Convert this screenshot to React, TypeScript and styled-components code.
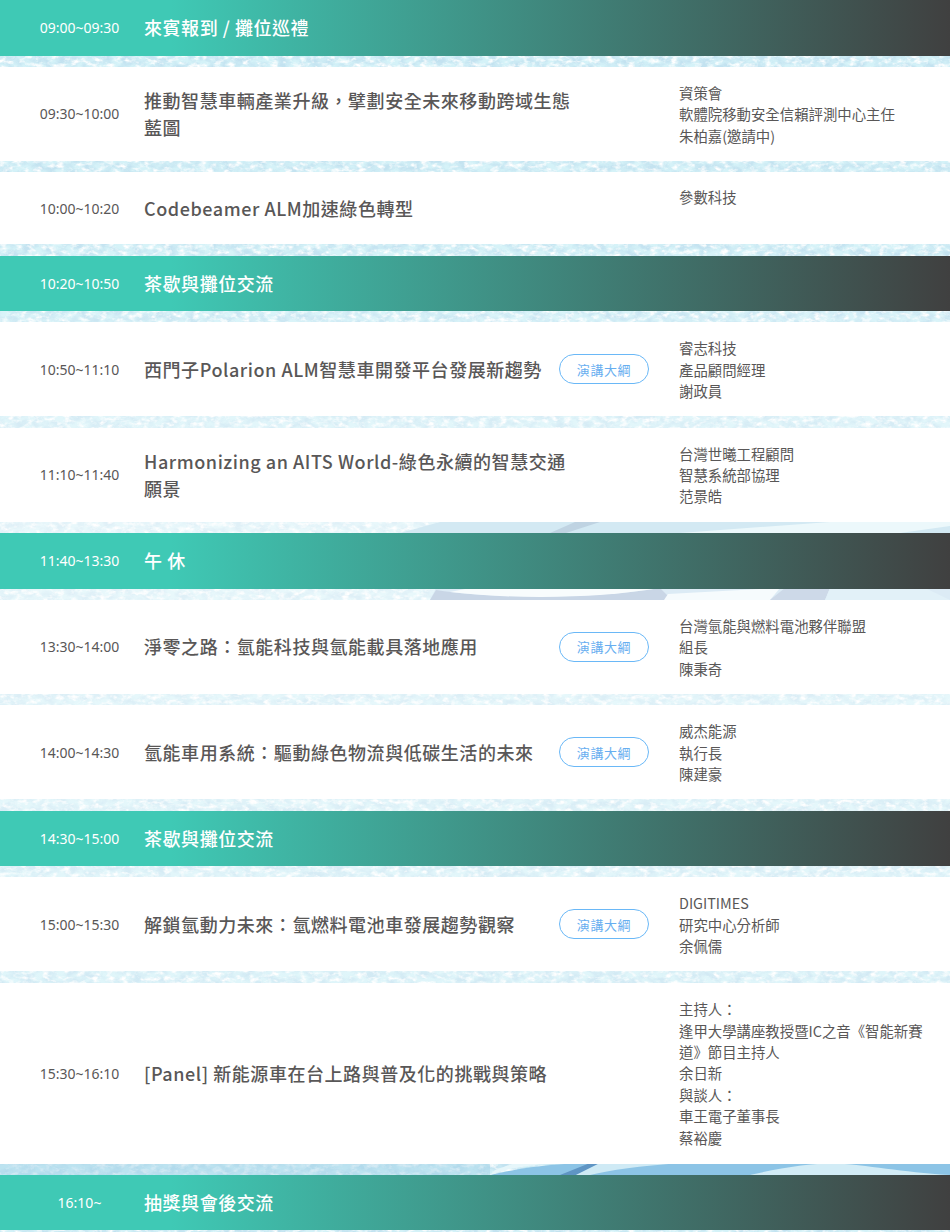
import React from 'react';
import styled, { createGlobalStyle } from 'styled-components';

const GlobalStyle = createGlobalStyle`
  html, body {
    margin: 0;
    padding: 0;
    background: #fff;
  }
  body {
    font-family: 'Noto Sans CJK TC', 'Noto Sans', sans-serif;
  }
`;

const Page = styled.div`
  position: relative;
  width: 950px;
  height: 1232px;
  overflow: hidden;
  background: #d4f2f8;
`;

const Backdrop = styled.svg`
  position: absolute;
  inset: 0;
  width: 950px;
  height: 1232px;
`;

const Agenda = styled.div`
  position: relative;
  display: flex;
  flex-direction: column;
  gap: 11.35px;
`;

const Row = styled.div<{ $break?: boolean; $h: number }>`
  display: grid;
  grid-template-columns: 144px 535px 1fr;
  align-items: center;
  height: ${({ $h }) => $h}px;
  background: ${({ $break }) =>
    $break ? 'linear-gradient(90deg, #3fc9b5 0%, #3fc9b5 18%, #404040 100%)' : '#fff'};
`;

const Time = styled.div<{ $break?: boolean }>`
  text-align: center;
  padding-left: 15px;
  font-family: 'Noto Sans', 'Noto Sans CJK TC', sans-serif;
  font-size: 14px;
  color: ${({ $break }) => ($break ? '#fff' : '#595757')};
`;

const Title = styled.div<{ $break?: boolean }>`
  display: flex;
  align-items: center;
  justify-content: space-between;
  padding-right: 30px;
  font-size: 18px;
  font-weight: 500;
  line-height: 27px;
  letter-spacing: 0.55px;
  color: ${({ $break }) => ($break ? '#fff' : '#595757')};
`;

const TitleText = styled.span`
  max-width: 430px;
`;

const OutlineButton = styled.span`
  flex: none;
  display: flex;
  align-items: center;
  justify-content: center;
  box-sizing: border-box;
  width: 90px;
  height: 30px;
  border: 1.5px solid #6ab8f7;
  border-radius: 15px;
  font-size: 13px;
  font-weight: 400;
  letter-spacing: 0.6px;
  color: #67aef0;
`;

const Speaker = styled.div<{ $top?: boolean }>`
  align-self: ${({ $top }) => ($top ? 'start' : 'center')};
  padding: ${({ $top }) => ($top ? '14px' : '0')} 26px 0 0;
  font-size: 14.4px;
  line-height: 21.4px;
  color: #595757;
`;

type Item = {
  time: string;
  title: string;
  h: number;
  brk?: boolean;
  outline?: boolean;
  top?: boolean;
  speaker?: string[];
};

const items: Item[] = [
  { time: '09:00~09:30', title: '來賓報到 / 攤位巡禮', h: 55.5, brk: true },
  {
    time: '09:30~10:00',
    title: '推動智慧車輛產業升級，擘劃安全未來移動跨域生態藍圖',
    h: 94,
    speaker: ['資策會', '軟體院移動安全信賴評測中心主任', '朱柏嘉(邀請中)'],
  },
  { time: '10:00~10:20', title: 'Codebeamer ALM加速綠色轉型', h: 72, top: true, speaker: ['參數科技'] },
  { time: '10:20~10:50', title: '茶歇與攤位交流', h: 55.5, brk: true },
  {
    time: '10:50~11:10',
    title: '西門子Polarion ALM智慧車開發平台發展新趨勢',
    h: 94,
    outline: true,
    speaker: ['睿志科技', '產品顧問經理', '謝政員'],
  },
  {
    time: '11:10~11:40',
    title: 'Harmonizing an AITS World-綠色永續的智慧交通願景',
    h: 94,
    speaker: ['台灣世曦工程顧問', '智慧系統部協理', '范景皓'],
  },
  { time: '11:40~13:30', title: '午 休', h: 55.5, brk: true },
  {
    time: '13:30~14:00',
    title: '淨零之路：氫能科技與氫能載具落地應用',
    h: 94,
    outline: true,
    speaker: ['台灣氫能與燃料電池夥伴聯盟', '組長', '陳秉奇'],
  },
  {
    time: '14:00~14:30',
    title: '氫能車用系統：驅動綠色物流與低碳生活的未來',
    h: 94,
    outline: true,
    speaker: ['威杰能源', '執行長', '陳建豪'],
  },
  { time: '14:30~15:00', title: '茶歇與攤位交流', h: 55.5, brk: true },
  {
    time: '15:00~15:30',
    title: '解鎖氫動力未來：氫燃料電池車發展趨勢觀察',
    h: 94,
    outline: true,
    speaker: ['DIGITIMES', '研究中心分析師', '余佩儒'],
  },
  {
    time: '15:30~16:10',
    title: '[Panel] 新能源車在台上路與普及化的挑戰與策略',
    h: 180.8,
    speaker: [
      '主持人：',
      '逢甲大學講座教授暨IC之音《智能新賽道》節目主持人',
      '余日新',
      '與談人：',
      '車王電子董事長',
      '蔡裕慶',
    ],
  },
  { time: '16:10~', title: '抽獎與會後交流', h: 55.5, brk: true },
];

// the site's photo background: icy texture on top, car-body swooshes lower down
const BackdropArt = () => (
  <Backdrop viewBox="0 0 950 1232">
    <defs>
      <filter id="mottle" x="0" y="0" width="100%" height="100%">
        <feTurbulence type="fractalNoise" baseFrequency="0.09 0.14" numOctaves="4" seed="7" />
        <feColorMatrix values="0 0 0 0 0.54  0 0 0 0 0.76  0 0 0 0 0.87  2.6 0 0 0 -0.9" />
      </filter>
      <filter id="fleck" x="0" y="0" width="100%" height="100%">
        <feTurbulence type="fractalNoise" baseFrequency="0.14 0.22" numOctaves="3" seed="21" />
        <feColorMatrix values="0 0 0 0 1  0 0 0 0 1  0 0 0 0 1  0 3 0 0 -1.4" />
      </filter>
      <linearGradient id="fade" x1="0" y1="0" x2="0" y2="1">
        <stop offset="0" stopColor="#fff" stopOpacity="0" />
        <stop offset="0.22" stopColor="#fff" stopOpacity="0.05" />
        <stop offset="0.42" stopColor="#fff" stopOpacity="0.5" />
        <stop offset="0.62" stopColor="#fff" stopOpacity="0.4" />
        <stop offset="0.82" stopColor="#fff" stopOpacity="0.25" />
        <stop offset="0.94" stopColor="#fff" stopOpacity="0" />
      </linearGradient>
    </defs>
    <rect width="950" height="1232" fill="#d4f2f8" />
    <rect width="950" height="1232" filter="url(#mottle)" />
    <rect width="950" height="1232" filter="url(#fleck)" />
    <rect width="950" height="1232" fill="url(#fade)" />

    {/* band above the lunch bar */}
    <path d="M400 533 L440 522 H950 V533 Z" fill="#d3e9f3" />
    <path d="M550 533 L575 522 H600 L566 533 Z" fill="#bfd3e2" />
    <path d="M680 533 L830 522 H950 V526 L900 533 Z" fill="#ecf8fb" />

    {/* band below the lunch bar */}
    <path d="M430 600 L436 588 H950 V600 Z" fill="#dcebf5" />
    <path d="M430 600 L436 590 C500 600 600 598 660 588 L672 600 Z" fill="#c9d6e6" />
    <path d="M450 592 C520 600 600 598 660 588 H470 Z" fill="#f8fcfd" />
    <path d="M664 600 L668 594 L780 588 L770 600 Z" fill="#f6fbfd" />
    <path d="M770 600 L785 588 H830 L825 600 Z" fill="#cdd9e8" />
    <path d="M825 600 L830 588 H925 L950 600 Z" fill="#e2f1f8" />

    {/* band above the last bar */}
    <rect x="0" y="1163" width="490" height="12" fill="#9fd0e6" opacity="0.45" />
    <path d="M490 1175 C530 1166 560 1163 600 1163 H950 V1175 Z" fill="#8cc4e6" />
    <path d="M490 1175 C510 1167 540 1163 580 1163 H515 L495 1170 Z" fill="#e6f6fa" />
    <path d="M560 1175 L590 1163 H600 L576 1175 Z" fill="#5f95c4" />
    <path d="M576 1175 L600 1163 H680 C640 1166 610 1170 590 1175 Z" fill="#cfeaf5" />
    <path d="M750 1175 C780 1168 810 1163 840 1163 H830 C870 1165 900 1172 950 1175 Z" fill="#d2ecf6" />
  </Backdrop>
);

export default function App() {
  return (
    <Page>
      <GlobalStyle />
      <BackdropArt />
      <Agenda>
        {items.map((item) => (
          <Row key={item.time} $break={item.brk} $h={item.h}>
            <Time $break={item.brk}>{item.time}</Time>
            <Title $break={item.brk}>
              <TitleText>{item.title}</TitleText>
              {item.outline && <OutlineButton>演講大綱</OutlineButton>}
            </Title>
            {item.speaker && (
              <Speaker $top={item.top}>
                {item.speaker.map((line) => (
                  <div key={line}>{line}</div>
                ))}
              </Speaker>
            )}
          </Row>
        ))}
      </Agenda>
    </Page>
  );
}
